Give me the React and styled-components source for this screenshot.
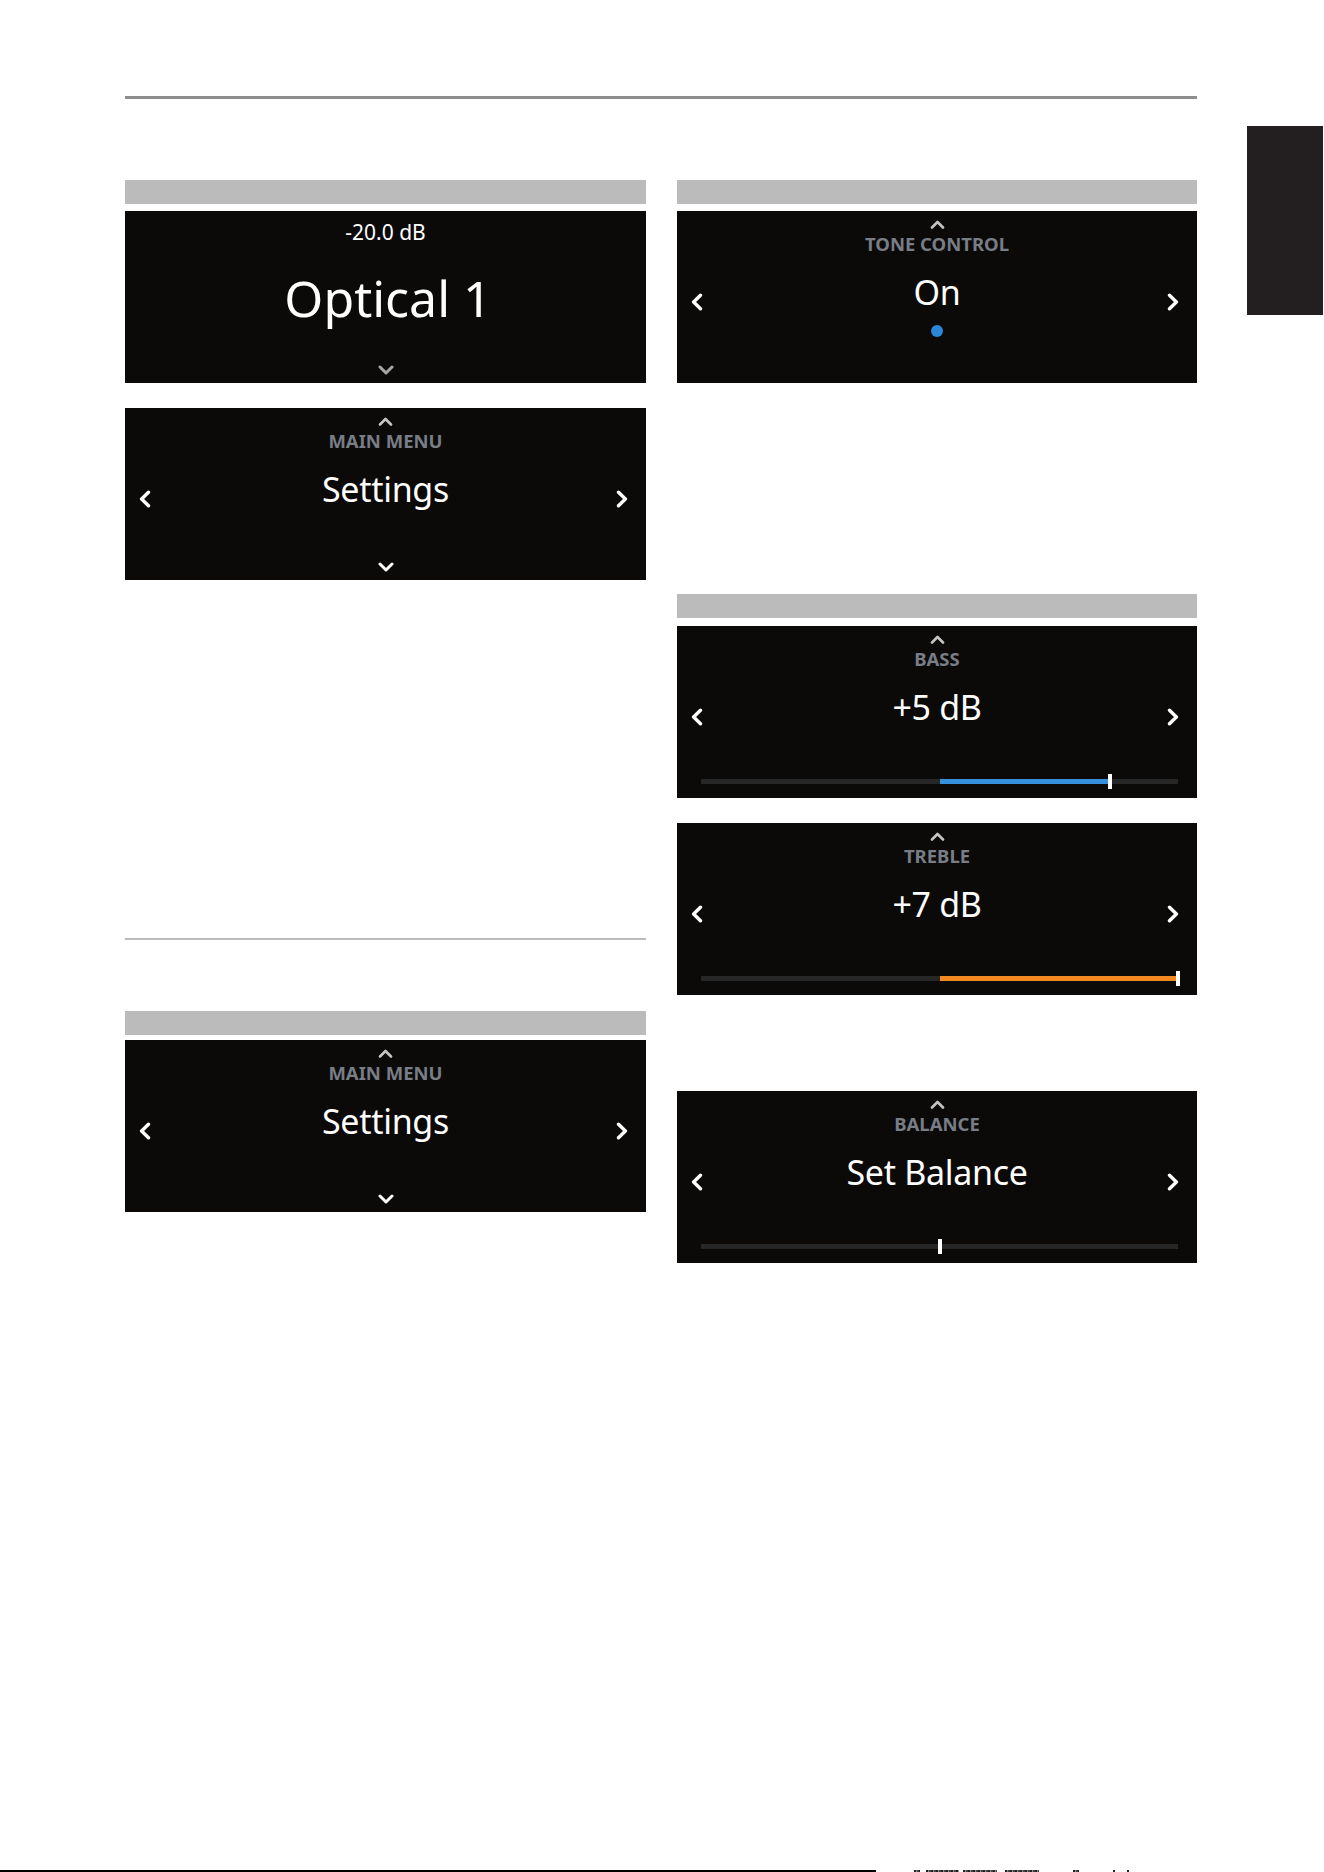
import React from 'react';
import styled, { createGlobalStyle } from 'styled-components';

const COLOR = {
  white: '#ffffff',
  panel: '#0b0a09',
  bar: '#bbbbbb',
  rule: '#8e8e8e',
  label: '#787d86',
  caret: '#c4c4c4',
  dimCaret: '#a6a6a6',
  track: '#262626',
  blue: '#3690dc',
  dot: '#2b88d8',
  orange: '#f48a22',
  tab: '#231f20',
};

const RANGE = 7;

const GlobalStyle = createGlobalStyle`
  html, body {
    margin: 0;
    padding: 0;
    background: ${COLOR.white};
  }
  body {
    font-family: "Noto Sans", "Open Sans", sans-serif;
  }
  * { box-sizing: border-box; }
`;

const UpCaret = () => (
  <CaretBox width="15" height="9" viewBox="0 0 15 9">
    <path d="M2 7.5 L7.5 2 L13 7.5" fill="none" stroke={COLOR.caret} strokeWidth="2.6" strokeLinecap="round" strokeLinejoin="round" />
  </CaretBox>
);

const DownCaret = ({ dim }) => (
  <DownBox width="16" height="10" viewBox="0 0 16 10">
    <path d="M2 2 L8 8 L14 2" fill="none" stroke={dim ? COLOR.dimCaret : COLOR.white} strokeWidth="3" strokeLinecap="round" strokeLinejoin="round" />
  </DownBox>
);

const SideArrow = ({ dir }) => (
  <ArrowSlot $dir={dir}>
    <svg width="12" height="18" viewBox="0 0 12 18">
      <path
        d={dir === 'left' ? 'M9.5 2.2 L2.6 9 L9.5 15.8' : 'M2.5 2.2 L9.4 9 L2.5 15.8'}
        fill="none"
        stroke={COLOR.white}
        strokeWidth="3.4"
        strokeLinecap="round"
        strokeLinejoin="round"
      />
    </svg>
  </ArrowSlot>
);

// bar from centre (0 dB) out to the current value
const ToneSlider = ({ value, color }) => {
  const pos = 50 + (value / RANGE) * 50;
  const left = Math.min(50, pos);
  const width = Math.abs(pos - 50);
  return (
    <Slider>
      <Track>
        {width > 0 && <Fill $color={color} style={{ left: `${left}%`, width: `${width}%` }} />}
      </Track>
      <Handle style={{ left: `${pos}%` }} />
    </Slider>
  );
};

const MenuPanel = ({ label, value, mt, dot, slider }) => (
  <Panel $mt={mt}>
    <SideArrow dir="left" />
    <Body $slider={!!slider}>
      <UpCaret />
      <Label>{label}</Label>
      <Value>{value}</Value>
      {dot && <Dot />}
      {!slider && !dot && <DownCaret />}
    </Body>
    <SideArrow dir="right" />
    {slider && <ToneSlider value={slider.value} color={slider.color} />}
  </Panel>
);

const App = () => {
  return (
    <Page>
      <GlobalStyle />
      <Top>
        <Main>
          <Rule />
          <Columns>
            <Column>
              <Bar />
              <Panel $mt={7}>
                <Body>
                  <Level>-20.0 dB</Level>
                  <Source>Optical 1</Source>
                  <DownCaret dim />
                </Body>
              </Panel>
              <MenuPanel mt={25} label="MAIN MENU" value="Settings" />
              <Divider />
              <Bar $mt={71} />
              <MenuPanel mt={5} label="MAIN MENU" value="Settings" />
            </Column>

            <Column>
              <Bar />
              <MenuPanel mt={7} label="TONE CONTROL" value="On" dot />
              <Bar $mt={211} />
              <MenuPanel mt={8} label="BASS" value="+5 dB" slider={{ value: 5, color: COLOR.blue }} />
              <MenuPanel mt={25} label="TREBLE" value="+7 dB" slider={{ value: 7, color: COLOR.orange }} />
              <MenuPanel mt={96} label="BALANCE" value="Set Balance" slider={{ value: 0, color: COLOR.blue }} />
            </Column>
          </Columns>
        </Main>
        <Tab />
      </Top>
      <Footer>
        <FootLine />
        <Scrap $w={6} $ml={38} />
        <Scrap $w={33} $ml={6} />
        <Scrap $w={34} $ml={4} />
        <Scrap $w={34} $ml={8} />
        <Scrap $w={6} $ml={34} />
        <Scrap $w={2} $ml={34} />
        <Scrap $w={2} $ml={12} />
      </Footer>
    </Page>
  );
};

export default App;

const Page = styled.div`
  width: 1324px;
  height: 1872px;
  display: flex;
  flex-direction: column;
  overflow: hidden;
  background: ${COLOR.white};
`;

const Top = styled.div`
  display: flex;
  align-items: flex-start;
  padding-left: 125px;
`;

const Main = styled.div`
  width: 1072px;
  padding-top: 96px;
`;

const Rule = styled.div`
  height: 3px;
  background: ${COLOR.rule};
`;

const Columns = styled.div`
  display: grid;
  grid-template-columns: 521px 520px;
  column-gap: 31px;
  margin-top: 81px;
`;

const Column = styled.div`
  display: flex;
  flex-direction: column;
`;

const Bar = styled.div`
  height: 24px;
  margin-top: ${({ $mt }) => $mt || 0}px;
  background: ${COLOR.bar};
`;

const Divider = styled.div`
  height: 2px;
  margin-top: 358px;
  background: ${COLOR.bar};
`;

const Panel = styled.div`
  display: grid;
  grid-template-columns: 48px 1fr 48px;
  grid-template-rows: 1fr auto;
  height: 172px;
  margin-top: ${({ $mt }) => $mt || 0}px;
  background: ${COLOR.panel};
  color: ${COLOR.white};
`;

const ArrowSlot = styled.div`
  grid-row: 1;
  grid-column: ${({ $dir }) => ($dir === 'left' ? 1 : 3)};
  justify-self: ${({ $dir }) => ($dir === 'left' ? 'start' : 'end')};
  align-self: start;
  margin-top: 82px;
  margin-left: ${({ $dir }) => ($dir === 'left' ? '14px' : '0')};
  margin-right: ${({ $dir }) => ($dir === 'left' ? '0' : '18px')};
  svg { display: block; }
`;

const Body = styled.div`
  grid-row: 1;
  grid-column: 2;
  display: flex;
  flex-direction: column;
  align-items: center;
  padding-top: 9px;
  padding-bottom: ${({ $slider }) => ($slider ? 0 : 8)}px;
`;

const CaretBox = styled.svg`
  display: block;
  flex: none;
`;

const DownBox = styled.svg`
  display: block;
  flex: none;
  margin-top: auto;
`;

const Level = styled.div`
  margin-top: 2px;
  font-size: 21px;
  line-height: 20px;
  white-space: nowrap;
`;

const Source = styled.div`
  margin-top: 28px;
  margin-left: 5px;
  font-size: 50px;
  line-height: 56px;
  white-space: nowrap;
`;

const Label = styled.div`
  margin-top: 5px;
  font-size: 18.5px;
  font-weight: 700;
  line-height: 20px;
  color: ${COLOR.label};
  white-space: nowrap;
`;

const Value = styled.div`
  margin-top: 18px;
  font-size: 34px;
  line-height: 40px;
  letter-spacing: -0.3px;
  white-space: nowrap;
`;

const Dot = styled.div`
  width: 12px;
  height: 12px;
  margin-top: 13px;
  border-radius: 50%;
  background: ${COLOR.dot};
`;

const Slider = styled.div`
  grid-row: 2;
  grid-column: 1 / -1;
  position: relative;
  display: flex;
  align-items: center;
  height: 15px;
  margin: 0 19px 9px 24px;
`;

const Track = styled.div`
  position: relative;
  flex: 1;
  height: 5px;
  background: ${COLOR.track};
`;

const Fill = styled.div`
  position: absolute;
  top: 0;
  bottom: 0;
  background: ${({ $color }) => $color};
`;

const Handle = styled.div`
  position: absolute;
  top: 0;
  width: 4px;
  height: 15px;
  transform: translateX(-50%);
  background: ${COLOR.white};
`;

const Tab = styled.div`
  flex: none;
  width: 76px;
  height: 189px;
  margin-top: 126px;
  margin-left: 50px;
  background: ${COLOR.tab};
`;

const Footer = styled.div`
  display: flex;
  align-items: flex-end;
  height: 2px;
  margin-top: auto;
`;

const FootLine = styled.div`
  width: 876px;
  height: 2px;
  background: #000;
`;

const Scrap = styled.div`
  width: ${({ $w }) => $w}px;
  height: 2px;
  margin-left: ${({ $ml }) => $ml}px;
  background: repeating-linear-gradient(90deg, #222 0 2px, #8a8a8a 2px 3px, #444 3px 5px);
`;
